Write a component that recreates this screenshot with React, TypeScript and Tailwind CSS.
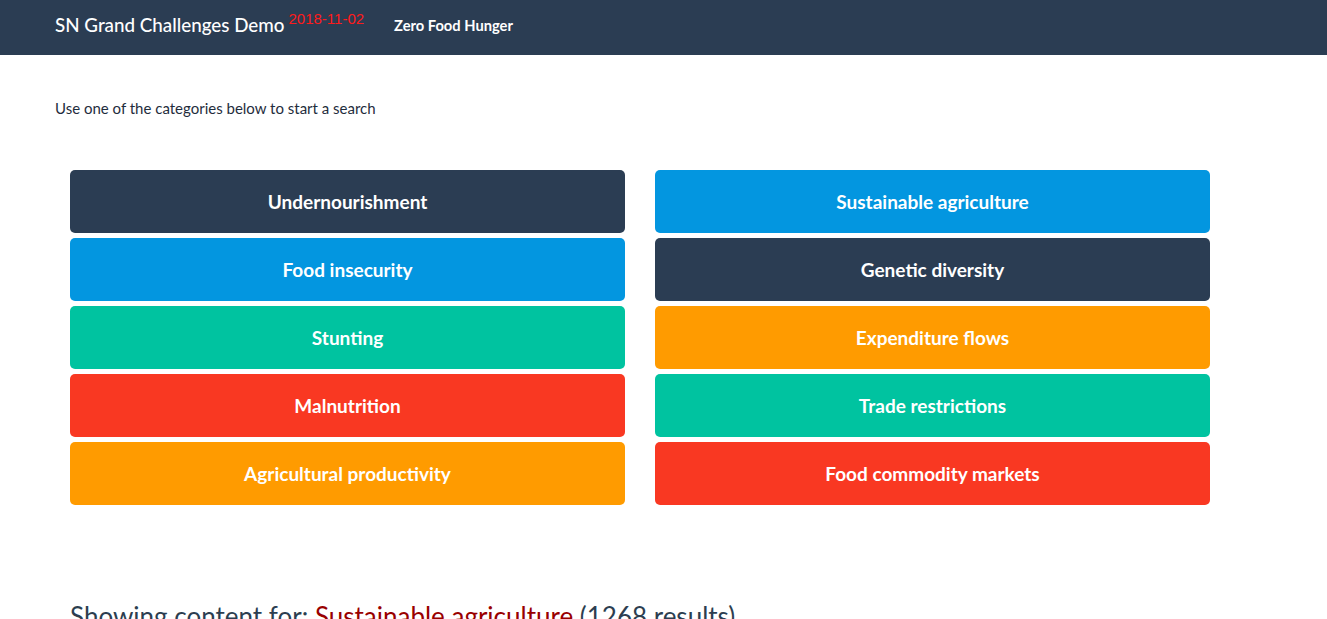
import React from 'react';

interface Category {
  label: string;
  color: string;
}

const left: Category[] = [
  { label: 'Undernourishment', color: 'bg-[#2b3d53]' },
  { label: 'Food insecurity', color: 'bg-[#0396e0]' },
  { label: 'Stunting', color: 'bg-[#00c3a0]' },
  { label: 'Malnutrition', color: 'bg-[#f93822]' },
  { label: 'Agricultural productivity', color: 'bg-[#ff9b00]' },
];

const right: Category[] = [
  { label: 'Sustainable agriculture', color: 'bg-[#0396e0]' },
  { label: 'Genetic diversity', color: 'bg-[#2b3d53]' },
  { label: 'Expenditure flows', color: 'bg-[#ff9b00]' },
  { label: 'Trade restrictions', color: 'bg-[#00c3a0]' },
  { label: 'Food commodity markets', color: 'bg-[#f93822]' },
];

const CategoryColumn: React.FC<{ items: Category[] }> = ({ items }) => (
  <div className="flex flex-col gap-[5px]">
    {items.map((c) => (
      <button
        key={c.label}
        className={`h-[63px] w-full rounded-[5px] text-white font-bold text-[19px] pt-[2px] ${c.color}`}
      >
        {c.label}
      </button>
    ))}
  </div>
);

export default function App() {
  return (
    <div className="min-h-[619px] bg-white text-[#2c3e50]" style={{ fontFamily: 'Lato, "Open Sans", sans-serif' }}>
      <nav className="h-[55px] bg-[#2b3d53] flex items-center pl-[55px] pb-[5px]">
        <span className="text-white text-[18.8px] font-medium leading-none">SN Grand Challenges Demo</span>
        <span
          className="text-[#ff1a1a] text-[15px] ml-[4px] leading-none self-start mt-[11px]"
          style={{ fontFamily: '"Liberation Sans", sans-serif' }}
        >
          2018-11-02
        </span>
        <span className="text-white text-[14.7px] font-bold ml-[30px] leading-none">Zero Food Hunger</span>
      </nav>

      <main className="pl-[55px]">
        <p className="mt-[44px] text-[15px] leading-[18px] text-[#1f2d3d]">Use one of the categories below to start a search</p>

        <div className="ml-[15px] mt-[53px] w-[1140px] grid grid-cols-2 gap-x-[30px]">
          <CategoryColumn items={left} />
          <CategoryColumn items={right} />
        </div>

        <h2 className="ml-[15px] mt-[96px] text-[26px] leading-[30px] text-[#2c3e50]">
          Showing content for: <span className="text-[#990000]">Sustainable agriculture</span> (1268 results)
        </h2>
      </main>
    </div>
  );
}
